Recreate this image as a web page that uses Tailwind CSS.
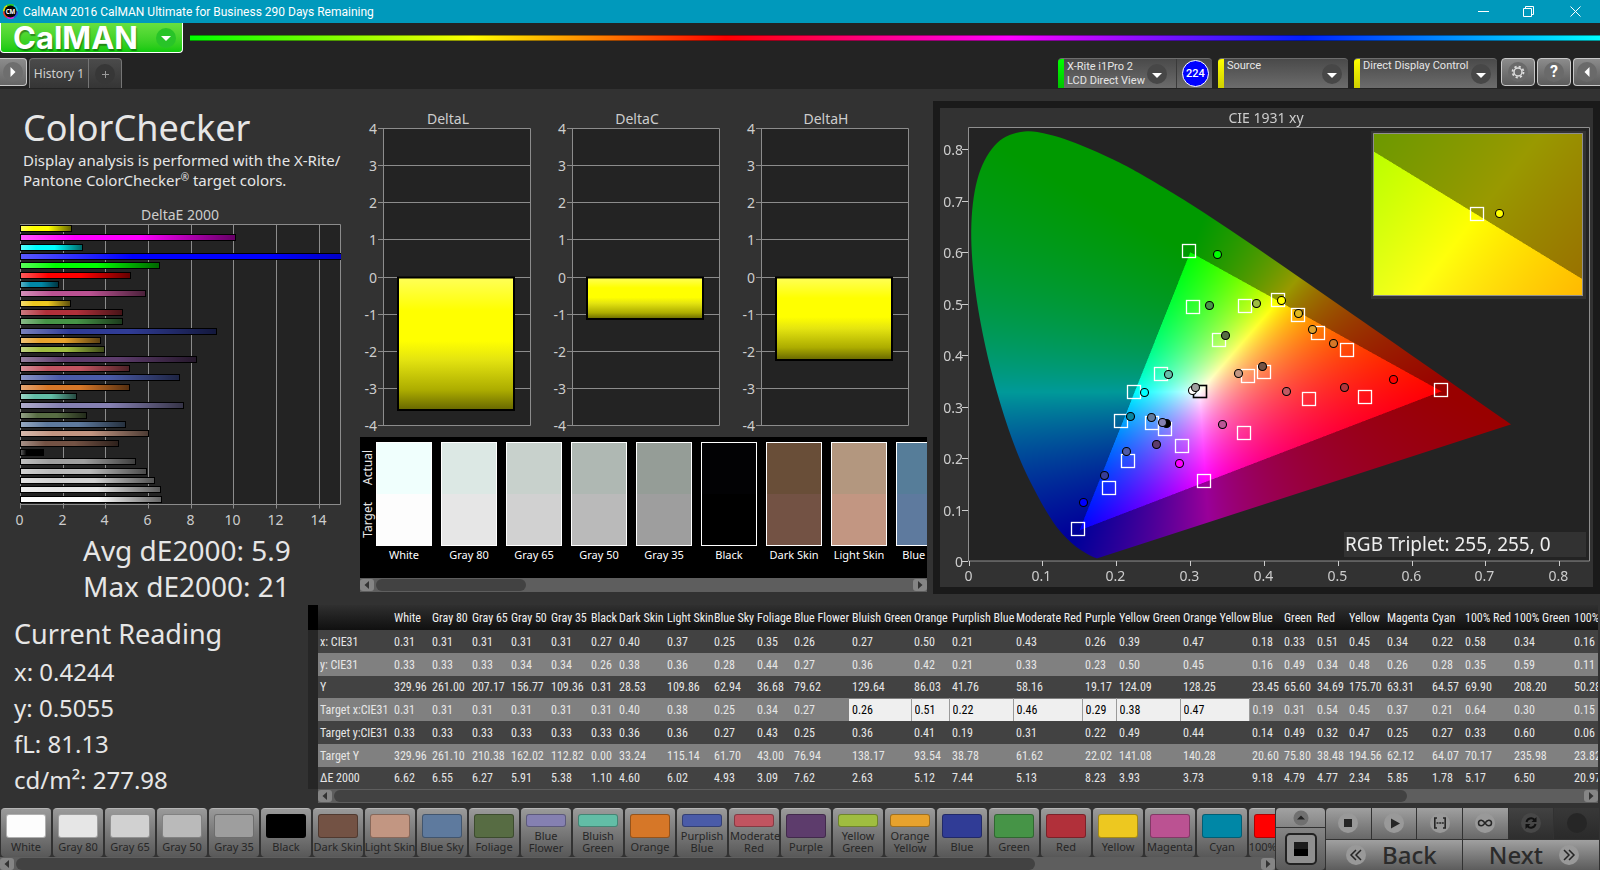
<!DOCTYPE html>
<html lang="en">
<head>
    <meta charset="UTF-8">
    <meta name="viewport" content="width=device-width, initial-scale=1.0">
    <title>CalMAN 2016</title>
    <script src="https://cdn.jsdelivr.net/npm/@tailwindcss/browser@4"></script>
</head>
<body class="min-h-screen overflow-x-hidden bg-[#232323] font-['Noto_Sans','Open_Sans',sans-serif] text-[#e6e6e6] flex flex-col">

    <!-- Title bar -->
    <header class="h-[23px] shrink-0 bg-[#0099bc] text-white flex items-center pl-[3px]">
        <svg class="size-[15px]" viewBox="0 0 16 16">
            <path d="M8 8 0 8A8 8 0 0 1 4 1z" fill="#e6e600"/><path d="M8 8 4 1A8 8 0 0 1 12 1z" fill="#2ecc2e"/>
            <path d="M8 8 12 1A8 8 0 0 1 16 8z" fill="#19c8e6"/><path d="M8 8 16 8A8 8 0 0 1 12 15z" fill="#2a52e0"/>
            <path d="M8 8 12 15A8 8 0 0 1 4 15z" fill="#d82ad8"/><path d="M8 8 4 15A8 8 0 0 1 0 8z" fill="#e63c28"/>
            <circle cx="8" cy="8" r="6.4" fill="#050505"/>
            <text x="8" y="10.4" text-anchor="middle" font-size="6.5" font-weight="700" fill="#fff">CM</text>
        </svg>
        <span class="ml-[5px] text-[12px] leading-4 font-['Roboto']">CalMAN 2016 CalMAN Ultimate for Business 290 Days Remaining</span>
        <div class="ml-auto flex h-full">
            <button aria-label="Minimize" class="w-[45px] flex items-center justify-center"><svg class="size-[11px]" viewBox="0 0 11 11"><path d="M0 5.5h11" stroke="#fff"/></svg></button>
            <button aria-label="Restore" class="w-[45px] flex items-center justify-center"><svg class="size-[11px]" viewBox="0 0 11 11"><path d="M.5 2.500h8v8h-8zM2.500 2.500v-2h8v8h-2" fill="none" stroke="#fff"/></svg></button>
            <button aria-label="Close" class="w-[49px] flex items-center justify-center"><svg class="size-[11px]" viewBox="0 0 11 11"><path d="M.5.5l10 10M10.500.5l-10 10" stroke="#fff"/></svg></button>
        </div>
    </header>

    <!-- Brand and spectrum line -->
    <div class="flex items-start h-[35px]">
        <button class="w-[183px] h-[30px] pl-3 pr-[6px] flex items-center justify-between rounded-b-[4px] border border-t-0 border-white bg-linear-to-b from-[#66e040] to-[#0cc90c]">
            <span class="text-[31px] leading-[30px] font-bold font-['Inter'] text-white [text-shadow:1px_2px_1px_rgba(0,0,0,.35)]">CalMAN</span>
            <svg class="size-5" viewBox="0 0 20 20"><circle cx="10" cy="10" r="10" fill="#28c428"/><path d="M5 8h10l-5 5z" fill="#fff"/></svg>
        </button>
        <div class="flex-1 h-[6px] mt-3 ml-[7px] border-y border-black/40 bg-[linear-gradient(to_right,#00ff00,#ffff00_20%,#ff0000_38%,#ff00ff_58%,#0020ff_79%,#00ffff)]"></div>
    </div>

    <!-- Tabs and device selectors -->
    <div class="flex h-[31px] items-start">
        <button aria-label="Open panel" class="w-[27px] h-7 flex items-center justify-center rounded-r-[4px] border border-l-0 border-[#c8c8c8] bg-linear-to-b from-[#8c8c8c] to-[#666666]">
            <svg class="size-5" viewBox="0 0 20 20"><circle cx="10" cy="10" r="10" fill="#6e6e6e"/><path d="M7.500 5l5 5-5 5z" fill="#fff"/></svg>
        </button>
        <div class="ml-[2px] flex h-[30px] rounded-t-[4px] border border-b-0 border-[#757575] bg-linear-to-b from-[#4b4b4b] to-[#353535]">
            <button class="w-[58px] text-[12px] text-[#d0d0d0] whitespace-nowrap">History 1</button>
            <button aria-label="Add tab" class="w-[33px] border-l border-[#757575] flex items-center justify-center">
                <svg class="size-5" viewBox="0 0 20 20"><circle cx="10" cy="10" r="10" fill="#373737"/><path d="M7 10.500h7M10.500 7v7" stroke="#9a9a9a"/></svg>
            </button>
        </div>

        <div class="ml-auto flex items-start gap-[6px] text-[11px] leading-[14px] font-['Roboto']">
            <div class="w-[154px] h-[30px] flex rounded-t-[4px] overflow-hidden border-t border-[#6e6e6e] bg-linear-to-b from-[#4a4a4a] to-[#6c6c6c]">
                <div class="w-[6px] shrink-0 bg-linear-to-b from-[#00ff00] to-[#00c400]"></div>
                <button class="flex-1 flex items-center justify-between pl-[3px] pr-[9px] text-left whitespace-nowrap">
                    <span>X-Rite i1Pro 2<br>LCD Direct View</span>
                    <svg class="size-5 shrink-0" viewBox="0 0 20 20"><circle cx="10" cy="10" r="10" fill="#474747"/><path d="M5 9h10l-5 5z" fill="#fff"/></svg>
                </button>
                <div class="w-[36px] shrink-0 border-l border-[#3a3a3a] flex items-center justify-center pl-[2px]">
                    <span class="size-[27px] rounded-full border border-white bg-[#0000ff] text-white font-medium flex items-center justify-center">224</span>
                </div>
            </div>
            <div class="w-[130px] h-[30px] flex rounded-t-[4px] overflow-hidden border-t border-[#6e6e6e] bg-linear-to-b from-[#4a4a4a] to-[#6c6c6c]">
                <div class="w-[6px] shrink-0 bg-linear-to-b from-[#ffff00] to-[#d0d000]"></div>
                <button class="flex-1 flex justify-between pl-[3px] pr-[6px] whitespace-nowrap">
                    <span>Source</span>
                    <svg class="size-5 self-center" viewBox="0 0 20 20"><circle cx="10" cy="10" r="10" fill="#474747"/><path d="M5 9h10l-5 5z" fill="#fff"/></svg>
                </button>
            </div>
            <div class="w-[143px] h-[30px] flex rounded-t-[4px] overflow-hidden border-t border-[#6e6e6e] bg-linear-to-b from-[#4a4a4a] to-[#6c6c6c]">
                <div class="w-[6px] shrink-0 bg-linear-to-b from-[#ffff00] to-[#d0d000]"></div>
                <button class="flex-1 flex justify-between pl-[3px] pr-[6px] whitespace-nowrap">
                    <span>Direct Display Control</span>
                    <svg class="size-5 shrink-0 self-center" viewBox="0 0 20 20"><circle cx="10" cy="10" r="10" fill="#474747"/><path d="M5 9h10l-5 5z" fill="#fff"/></svg>
                </button>
            </div>
            <div class="flex gap-[2px] -ml-[2px]">
                <button aria-label="Settings" class="w-[34px] h-7 flex items-center justify-center rounded-[4px] border border-[#c8c8c8] bg-linear-to-b from-[#8c8c8c] to-[#5c5c5c]">
                    <svg class="size-5" viewBox="0 0 20 20"><circle cx="10" cy="10" r="10" fill="#6a6a6a"/><circle cx="10" cy="10" r="4" fill="none" stroke="#ddd" stroke-width="1.500"/><circle cx="10" cy="10" r="5.500" fill="none" stroke="#ddd" stroke-width="1.800" stroke-dasharray="2.200 2.120"/></svg>
                </button>
                <button aria-label="Help" class="w-[34px] h-7 flex items-center justify-center rounded-[4px] border border-[#c8c8c8] bg-linear-to-b from-[#8c8c8c] to-[#5c5c5c]">
                    <span class="size-5 rounded-full bg-[#6a6a6a] text-[16px] leading-5 font-bold text-white">?</span>
                </button>
                <button aria-label="Close panel" class="w-[27px] h-7 flex items-center justify-center rounded-l-[4px] border border-r-0 border-[#c8c8c8] bg-linear-to-b from-[#8c8c8c] to-[#5c5c5c]">
                    <svg class="size-5" viewBox="0 0 20 20"><circle cx="10" cy="10" r="10" fill="#6a6a6a"/><path d="M12.500 5l-5 5 5 5z" fill="#fff"/></svg>
                </button>
            </div>
        </div>
    </div>

    <main class="flex-1 bg-[#323232]">
        <div class="grid grid-cols-[minmax(0,360fr)_minmax(0,567fr)_minmax(0,673fr)]">
            <!-- Summary column -->
            <section class="pt-[19px]">
                <h1 class="pl-[23px] text-[36px] leading-10">ColorChecker</h1>
                <p class="pl-[23px] mt-[2px] text-[15px] leading-5 whitespace-nowrap">Display analysis is performed with the X-Rite/<br>Pantone ColorChecker<sup class="text-[10px]">®</sup> target colors.</p>
                <svg id="deltaE" class="w-full mt-[15px]" viewBox="0 205 360 325"></svg>
                <div class="w-fit ml-[83px] mt-[2px] text-[28px] leading-9">
                    <p>Avg dE2000: 5.9</p>
                    <p>Max dE2000: 21</p>
                </div>
            </section>

            <!-- Delta charts and swatches -->
            <section class="pt-[18px]">
                <div id="deltas" class="grid grid-cols-3"></div>
                <div class="bg-black">
                    <div class="flex h-[141px] pt-[5px] overflow-hidden">
                        <div class="w-4 h-[104px] shrink-0 flex flex-col-reverse justify-around items-center text-[12px] leading-4">
                            <span class="[writing-mode:vertical-rl] rotate-180">Target</span>
                            <span class="[writing-mode:vertical-rl] rotate-180">Actual</span>
                        </div>
                        <div id="swatches" class="flex gap-[9px]"></div>
                    </div>
                    <div class="scrollbar" data-thumb="28"></div>
                </div>
            </section>

            <!-- Chromaticity diagram -->
            <section class="mt-3 ml-[6px] grid self-start border-[7px] border-[#1a1a1a] bg-[#323232]">
                <canvas id="gamut" class="[grid-area:1/1] w-full bg-[#323232]" width="1306" height="958"></canvas>
                <svg id="cie" class="[grid-area:1/1] w-full" viewBox="940 108 653 479"></svg>
            </section>
        </div>

        <div class="flex">
            <!-- Current reading -->
            <section class="w-[308px] shrink-0 pl-[14px] pt-3 leading-9">
                <h2 class="text-[27px]">Current Reading</h2>
                <div class="mt-[2px] text-[24px]">
                    <p>x: 0.4244</p>
                    <p>y: 0.5055</p>
                    <p>fL: 81.13</p>
                    <p>cd/m²: 277.98</p>
                </div>
            </section>
            <section class="flex-1 min-w-0 mr-[2px] mt-px">
                <div class="overflow-hidden">
                    <table id="readings" class="table-fixed w-[1324px] border-collapse text-left text-[12px] leading-4 whitespace-nowrap font-['Noto_Sans_Condensed','Roboto_Condensed','Liberation_Sans',sans-serif]"></table>
                </div>
                <div class="ml-[10px]"><div class="scrollbar" data-thumb="86"></div></div>
            </section>
        </div>
    </main>

    <!-- Pattern picker and transport controls -->
    <footer class="flex h-[63px] bg-[#323232]">
        <div class="flex-1 min-w-0">
            <div id="patterns" class="flex gap-[2px] h-[50px] pt-px pl-px overflow-hidden"></div>
            <div class="scrollbar" data-thumb="82"></div>
        </div>
        <div class="w-[49px] ml-px flex flex-col gap-px">
            <button aria-label="Expand" class="h-[19px] mt-px flex items-center justify-center rounded-t-[4px] bg-linear-to-b from-[#a2a2a2] to-[#858585]">
                <svg class="size-4" viewBox="0 0 16 16"><circle cx="8" cy="8" r="7.500" fill="#707070"/><path d="M4 9.500h8l-4-4z" fill="#222"/></svg>
            </button>
            <button aria-label="Stop pattern" class="h-[42px] flex items-center justify-center rounded-b-[4px] bg-linear-to-b from-[#858585] to-[#5a5a5a]">
                <svg class="size-8" viewBox="0 0 32 32"><rect x="1" y="1" width="30" height="30" rx="4" fill="#8f8f8f" stroke="#222" stroke-width="2"/><path d="M9 9h14v14H9z" fill="#000"/><path d="M9 9h14v7H9z" fill="#1c1c1c"/></svg>
            </button>
        </div>
        <div class="w-[273px] ml-px mr-px mt-px grid grid-cols-6 grid-rows-2 gap-px text-[#2b2b2b]">
            <button aria-label="Stop" class="flex items-center justify-center rounded-tl-[4px] bg-linear-to-b from-[#a0a0a0] to-[#686868]"><svg class="size-5" viewBox="0 0 20 20"><circle cx="10" cy="10" r="10" fill="#999"/><path d="M6 6h8v8H6z" fill="#252525"/></svg></button>
            <button aria-label="Play" class="flex items-center justify-center bg-linear-to-b from-[#a0a0a0] to-[#686868]"><svg class="size-5" viewBox="0 0 20 20"><circle cx="10" cy="10" r="10" fill="#999"/><path d="M7 5.500l9 5-9 5z" fill="#252525"/></svg></button>
            <button aria-label="Read series" class="flex items-center justify-center bg-linear-to-b from-[#a0a0a0] to-[#686868]"><svg class="size-5" viewBox="0 0 20 20"><circle cx="10" cy="10" r="10" fill="#999"/><path d="M7 5H4.800v10H7M13 5h2.200v10H13M6.500 10h2M9.200 10h2M11.800 10h2" fill="none" stroke="#252525" stroke-width="1.600"/></svg></button>
            <button aria-label="Continuous" class="flex items-center justify-center bg-linear-to-b from-[#a0a0a0] to-[#686868]"><svg class="size-5" viewBox="0 0 20 20"><circle cx="10" cy="10" r="10" fill="#999"/><path d="M10 10C8.500 8 7.500 7.200 6.300 7.200a2.800 2.800 0 0 0 0 5.600C7.500 12.800 8.500 12 10 10s2.500-2.800 3.700-2.800a2.800 2.800 0 0 1 0 5.600C12.500 12.800 11.500 12 10 10z" fill="none" stroke="#252525" stroke-width="1.500"/></svg></button>
            <button aria-label="Refresh" class="flex items-center justify-center bg-linear-to-b from-[#424242] to-[#2e2e2e]"><svg class="size-5" viewBox="0 0 20 20"><circle cx="10" cy="10" r="10" fill="#474747"/><path d="M5.500 9a4.700 4.700 0 0 1 8-2.200M14.500 11a4.700 4.700 0 0 1-8 2.200" fill="none" stroke="#111" stroke-width="2"/><path d="M15.500 4v5h-5zM4.500 16v-5h5z" fill="#111"/></svg></button>
            <button aria-label="Record" class="flex items-center justify-center bg-linear-to-b from-[#383838] to-[#2a2a2a]"><svg class="size-5" viewBox="0 0 20 20"><circle cx="10" cy="10" r="10" fill="#262626"/></svg></button>
            <button class="col-span-3 flex items-center gap-4 pl-5 text-[24px] leading-7 font-medium bg-linear-to-b from-[#a0a0a0] to-[#5c5c5c]">
                <svg class="size-5" viewBox="0 0 20 20"><circle cx="10" cy="10" r="10" fill="#999"/><path d="M10 5l-5 5 5 5M15 5l-5 5 5 5" fill="none" stroke="#252525" stroke-width="1.500"/></svg>Back
            </button>
            <button class="col-span-3 flex items-center justify-end gap-4 pr-5 text-[24px] leading-7 font-medium bg-linear-to-b from-[#a0a0a0] to-[#5c5c5c]">
                Next<svg class="size-5" viewBox="0 0 20 20"><circle cx="10" cy="10" r="10" fill="#999"/><path d="M5 5l5 5-5 5M10 5l5 5-5 5" fill="none" stroke="#252525" stroke-width="1.500"/></svg>
            </button>
        </div>
    </footer>

    <script>
        // name, column width, target colour, then the seven table values
        const patches = [
            ["White", 38, "#fdfdfd", "0.31 0.33 329.96 0.31 0.33 329.96 6.62"],
            ["Gray 80", 40, "#e6e6e6", "0.31 0.33 261.00 0.31 0.33 261.10 6.55"],
            ["Gray 65", 39, "#d1d1d1", "0.31 0.33 207.17 0.31 0.33 210.38 6.27"],
            ["Gray 50", 40, "#bababa", "0.31 0.34 156.77 0.31 0.33 162.02 5.91"],
            ["Gray 35", 40, "#9e9e9e", "0.31 0.34 109.36 0.31 0.33 112.82 5.38"],
            ["Black", 28, "#000000", "0.27 0.26 0.31 0.31 0.33 0.00 1.10"],
            ["Dark Skin", 48, "#735244", "0.40 0.38 28.53 0.40 0.36 33.24 4.60"],
            ["Light Skin", 47, "#c29682", "0.37 0.36 109.86 0.38 0.36 115.14 6.02"],
            ["Blue Sky", 43, "#5e7a9e", "0.25 0.28 62.94 0.25 0.27 61.70 4.93"],
            ["Foliage", 37, "#576c43", "0.35 0.44 36.68 0.34 0.43 43.00 3.09"],
            ["Blue Flower", 58, "#8580b1", "0.26 0.27 79.62 0.27 0.25 76.94 7.62"],
            ["Bluish Green", 62, "#62bda6", "0.27 0.36 129.64 0.26 0.36 138.17 2.63"],
            ["Orange", 38, "#d67728", "0.50 0.42 86.03 0.51 0.41 93.54 5.12"],
            ["Purplish Blue", 64, "#4a5ba8", "0.21 0.21 41.76 0.22 0.19 38.78 7.44"],
            ["Moderate Red", 69, "#c15460", "0.43 0.33 58.16 0.46 0.31 61.62 5.13"],
            ["Purple", 34, "#5d3c6c", "0.26 0.23 19.17 0.29 0.22 22.02 8.23"],
            ["Yellow Green", 64, "#9fbd40", "0.39 0.50 124.09 0.38 0.49 141.08 3.93"],
            ["Orange Yellow", 69, "#e7a22d", "0.47 0.45 128.25 0.47 0.44 140.28 3.73"],
            ["Blue", 32, "#303c96", "0.18 0.16 23.45 0.19 0.14 20.60 9.18"],
            ["Green", 33, "#469447", "0.33 0.49 65.60 0.31 0.49 75.80 4.79"],
            ["Red", 32, "#b1303a", "0.51 0.34 34.69 0.54 0.32 38.48 4.77"],
            ["Yellow", 38, "#edc820", "0.45 0.48 175.70 0.45 0.47 194.56 2.34"],
            ["Magenta", 45, "#bb5292", "0.34 0.26 63.31 0.37 0.25 62.12 5.85"],
            ["Cyan", 33, "#0087a6", "0.22 0.28 64.57 0.21 0.27 64.07 1.78"],
            ["100% Red", 49, "#ff0000", "0.58 0.35 69.90 0.64 0.33 70.17 5.17"],
            ["100% Green", 60, "#00ff00", "0.34 0.59 208.20 0.30 0.60 235.98 6.50"],
            ["100% Blue", 61, "#0000ff", "0.16 0.11 50.28 0.15 0.06 23.82 20.97"]
        ];
        const rowNames = ["x: CIE31", "y: CIE31", "Y", "Target x:CIE31", "Target y:CIE31", "Target Y", "ΔE 2000"];

        // Readings table
        document.getElementById('readings').innerHTML = `
            <colgroup><col style="width:10px"><col style="width:73px">${patches.map(p => `<col style="width:${p[1]}px">`).join('')}</colgroup>
            <thead><tr class="h-[25px] bg-linear-to-b from-[#303030] to-[#101010]">
                <td class="bg-black"></td><td></td>
                ${patches.map(p => `<th scope="col" class="p-0 pl-[3px] font-normal text-[#f0f0f0]">${p[0]}</th>`).join('')}
            </tr></thead>
            <tbody>${rowNames.map((name, r) => `
                <tr class="${r % 4 === 2 ? 'h-[22px]' : 'h-[23px]'} ${r % 2 ? 'bg-[#808080]' : 'bg-[#424242]'}">
                    <td class="bg-[#262626]"></td>
                    <th scope="row" class="p-0 pl-[2px] font-normal">${name}</th>
                    ${patches.map((p, c) => {
                        const value = p[3].split(' ')[r];
                        return r === 3 && c > 10 && c < 18
                            ? `<td class="p-0 border-r border-[#9a9a9a]"><input aria-label="${p[0]} target x" value="${value}" class="block w-full h-[22px] pl-[3px] bg-[#efefef] text-black"></td>`
                            : `<td class="p-0 pl-[3px]">${value}</td>`;
                    }).join('')}
                </tr>`).join('')}
            </tbody>`;

        // Pattern buttons
        const twoLine = ["Blue Flower", "Bluish Green", "Purplish Blue", "Moderate Red", "Yellow Green", "Orange Yellow"];
        document.getElementById('patterns').innerHTML = patches.slice(0, 25).map(p => `
            <button class="w-[50px] h-[49px] shrink-0 flex flex-col items-center pt-[5px] rounded-[4px] border-t border-[#b5b5b5] bg-linear-to-b from-[#9a9a9a] to-[#585858] text-[11px] leading-[12px] text-[#262626]">
                <span class="w-10 rounded-[3px] border border-black/30 ${twoLine.includes(p[0]) ? 'h-[13px] mb-[3px]' : 'h-6 mb-[3px]'}" style="background:${p[2]}"></span>
                <span class="${twoLine.includes(p[0]) ? 'w-12 text-center' : 'whitespace-nowrap'}">${p[0]}</span>
            </button>`).join('');

        // Actual over target swatches
        const actual = ["#f0fffd", "#dce8e4", "#c8d1cc", "#afb8b3", "#959d97", "#020204", "#694e38", "#b3977f", "#567d99"];
        document.getElementById('swatches').innerHTML = actual.map((color, i) => `
            <div class="w-14 shrink-0 text-[11px] leading-4 text-white text-center whitespace-nowrap">
                <div class="h-[104px] mb-px border border-white flex flex-col">
                    <div class="flex-1" style="background:${color}"></div>
                    <div class="flex-1" style="background:${patches[i][2]}"></div>
                </div>
                ${patches[i][0]}
            </div>`).join('');

        document.querySelectorAll('.scrollbar').forEach(bar => {
            bar.innerHTML = `
                <div class="flex items-center h-[14px] bg-[#5e5e5e]">
                    <button aria-label="Scroll left" class="w-[14px] h-3 rounded-[3px] bg-[#858585] flex items-center justify-center"><svg class="size-2" viewBox="0 0 8 8"><path d="M6 0v8L1.500 4z" fill="#333"/></svg></button>
                    <div class="flex-1 mx-[2px]"><div class="h-3 rounded-full bg-[#424242]" style="width:${bar.dataset.thumb}%"></div></div>
                    <button aria-label="Scroll right" class="w-[14px] h-3 rounded-[3px] bg-[#858585] flex items-center justify-center"><svg class="size-2" viewBox="0 0 8 8"><path d="M2 0v8l4.500-4z" fill="#333"/></svg></button>
                </div>`;
        });

        // DeltaE 2000 bars, top row first
        const bars = [["#ffff00", 2.4], ["#ff00ff", 10.1], ["#00ffff", 2.93]]
            .concat([26, 25, 24, 23, 22, 21, 20, 19, 18, 17, 16, 15, 14, 13, 12, 11, 10, 9, 8, 7, 6, 5, 4, 3, 2, 1, 0]
                .map(i => [patches[i][2], Number(patches[i][3].split(' ')[6])]));
        let e = `<defs>
            <linearGradient id="shadeX"><stop offset="0" stop-color="#fff" stop-opacity=".35"/><stop offset=".25" stop-color="#fff" stop-opacity="0"/><stop offset=".55" stop-color="#000" stop-opacity="0"/><stop offset="1" stop-color="#000" stop-opacity=".6"/></linearGradient>
            <clipPath id="plotE"><path d="M20 224h321v281H20z"/></clipPath></defs>
            <text x="180" y="220" text-anchor="middle" font-size="14" fill="#cdcdcd">DeltaE 2000</text>
            <path d="M20.500 224.500h320v280h-320z" fill="#232323" stroke="#8c8c8c"/>`;
        for (let v = 0; v <= 14; v += 2) {
            const x = Math.round(20 + v * 21.33) + 0.5;
            e += `<path d="M${x} 224.500v284" stroke="#8c8c8c"/><text x="${x - 1}" y="525" text-anchor="middle" font-size="14" fill="#cdcdcd">${v}</text>`;
        }
        e += '<g clip-path="url(#plotE)">' + bars.map(([color, v], i) => {
            const y = Math.round(225 + i * 9.33), w = Math.round(v * 21.33);
            return `<path d="M20 ${y}h${w + 1}v7H20z"/><path d="M21 ${y + 1}h${w - 1}v5H21z" fill="${color}"/><path d="M21 ${y + 1}h${w - 1}v5H21z" fill="url(#shadeX)"/>`;
        }).join('') + '</g>';
        document.getElementById('deltaE').innerHTML = e;

        // DeltaL / DeltaC / DeltaH
        document.getElementById('deltas').innerHTML = [["DeltaL", 3.6], ["DeltaC", 1.14], ["DeltaH", 2.24]].map(([name, v]) => {
            let s = `<text x="88" y="17" text-anchor="middle" font-size="14" fill="#cdcdcd">${name}</text><path d="M23.500 21.500h147v297h-147z" fill="#232323" stroke="#8c8c8c"/>`;
            for (let k = 4; k >= -4; k--) {
                const y = Math.floor(170 - k * 37.1) + 0.5;
                s += `<path d="M18 ${y}h152" stroke="#8c8c8c"/><text x="17" y="${y + 5}" text-anchor="end" font-size="14" fill="#cdcdcd">${k}</text>`;
            }
            const h = Math.floor(v * 37.1) - 0.5;
            return `<svg class="w-full" viewBox="0 0 189 330">
                <defs><linearGradient id="${name}" x2="0" y2="1"><stop offset="0" stop-color="#ffff58"/><stop offset=".25" stop-color="#ffff00"/><stop offset=".48" stop-color="#ffff00"/><stop offset=".62" stop-color="#e4e410"/><stop offset=".85" stop-color="#acac00"/><stop offset="1" stop-color="#666600"/></linearGradient></defs>
                ${s}<path d="M38 170.500h116v${h}H38z" fill="url(#${name})" stroke="#000" stroke-width="2"/></svg>`;
        }).join('');

        // CIE 1931 diagram
        const X0 = 968.5, Y0 = 561, SX = 738.5, SY = 515;
        const locus = [[.1741, .005], [.1644, .0109], [.144, .0297], [.1241, .0578], [.1096, .0868], [.0913, .1327], [.0687, .2007], [.0454, .295], [.0235, .4127], [.0082, .5384], [.0039, .6548], [.0139, .7502], [.0389, .812], [.0743, .8338], [.1142, .8262], [.1547, .8059], [.1929, .7816], [.2296, .7543], [.3016, .6923], [.3731, .6245], [.4441, .5547], [.5125, .4866], [.5752, .4242], [.627, .3725], [.6658, .334], [.6915, .3083], [.719, .2809], [.7347, .2653]];

        function colorAt(x, y) {
            const z = 1 - x - y;
            const rgb = [
                3.2406 * x - 1.5372 * y - 0.4986 * z,
                -0.9689 * x + 1.8758 * y + 0.0415 * z,
                0.0557 * x - 0.2040 * y + 1.0570 * z
            ];
            const level = Math.min(...rgb) < 0 ? 153 : 255;
            const max = Math.max(...rgb);
            return rgb.map(c => Math.max(0, c) / max * level);
        }

        const canvas = document.getElementById('gamut');
        const ctx = canvas.getContext('2d');

        // fills a page rectangle with chromaticity colours, toXY maps plot units to x,y
        function paint(left, top, width, height, toXY) {
            const layer = document.createElement('canvas');
            layer.width = width * 2;
            layer.height = height * 2;
            const lctx = layer.getContext('2d');
            const image = lctx.createImageData(layer.width, layer.height);
            for (let j = 0, k = 0; j < layer.height; j++) {
                for (let i = 0; i < layer.width; i++, k += 4) {
                    const [r, g, b] = colorAt(...toXY(left + i / 2, top + j / 2));
                    image.data[k] = r;
                    image.data[k + 1] = g;
                    image.data[k + 2] = b;
                    image.data[k + 3] = 255;
                }
            }
            lctx.putImageData(image, 0, 0);
            return layer;
        }

        ctx.setTransform(2, 0, 0, 2, -1880, -216);
        ctx.fillStyle = '#232323';
        ctx.fillRect(969, 128, 620, 433);
        const pts = locus.map(([x, y]) => [X0 + x * SX, Y0 - y * SY]);
        ctx.save();
        ctx.beginPath();
        ctx.moveTo(...pts[0]);
        for (let i = 0; i < pts.length - 1; i++) {
            const a = pts[Math.max(i - 1, 0)], b = pts[i], c = pts[i + 1], d = pts[Math.min(i + 2, pts.length - 1)];
            ctx.bezierCurveTo(b[0] + (c[0] - a[0]) / 6, b[1] + (c[1] - a[1]) / 6, c[0] - (d[0] - b[0]) / 6, c[1] - (d[1] - b[1]) / 6, c[0], c[1]);
        }
        ctx.closePath();
        ctx.clip();
        ctx.drawImage(paint(968, 128, 550, 434, (px, py) => [(px - X0) / SX, (Y0 - py) / SY]), 968, 128, 550, 434);
        ctx.restore();
        // zoomed inset round the current target
        ctx.fillStyle = '#323232';
        ctx.fillRect(1371, 131, 215, 168);
        ctx.drawImage(paint(1373, 133, 210, 163, (px, py) => [.4193 + (px - 1477) / 4430, .5053 - (py - 214.5) / 3412]), 1373, 133, 210, 163);

        const targets = [[1189, 251], [1193, 307], [1245, 306], [1219, 340], [1278, 300], [1298, 315], [1318, 333], [1347, 350], [1161, 374], [1134, 392], [1121, 421], [1152, 423], [1165, 429], [1182, 446], [1128, 461], [1109, 488], [1204, 481], [1078, 529], [1244, 433], [1248, 376], [1264, 372], [1309, 399], [1365, 397], [1441, 390], [1477, 214]];
        const measured = [[1217, 254, "#00ff00"], [1209, 305, "#489448"], [1256, 303, "#9dbc40"], [1225, 335, "#576c43"], [1281, 300, "#ffff00"], [1298, 313, "#e0b91f"], [1312, 329, "#e0a32e"], [1333, 343, "#d67728"], [1168, 374, "#67bdaa"], [1144, 392, "#00ffff"], [1130, 416, "#0885a1"], [1151, 417, "#627a9d"], [1166, 423, "#000000"], [1162, 422, "#8580b1"], [1156, 444, "#5e3c6c"], [1126, 451, "#505ba6"], [1104, 475, "#383d96"], [1083, 502, "#0000ff"], [1179, 463, "#ff00ff"], [1222, 424, "#bb5695"], [1238, 373, "#c29682"], [1262, 366, "#735244"], [1192, 390, "#ffffff"], [1195, 387, "#9e9e9e"], [1286, 391, "#c15a63"], [1344, 387, "#af363c"], [1393, 379, "#ff0000"], [1499, 213, "#ffff00"]];
        let c = '<text x="1266" y="123" text-anchor="middle" font-size="14" fill="#cdcdcd">CIE 1931 xy</text><path d="M968.500 127.500h621v433.500h-621zM1373.500 133.500h209v162h-209z" fill="none" stroke="#8f8f8f"/>';
        for (let k = 0; k <= 8; k++) {
            const x = Math.round(X0 + k * 73.85) + 0.5, y = Math.round(Y0 - k * 51.5) + 0.5, label = k ? `0.${k}` : '0';
            c += `<path d="M${x} 561v5M962 ${y}h6" stroke="#cdcdcd"/>
                <text x="${x - 1}" y="581" text-anchor="middle" font-size="14" fill="#cdcdcd">${label}</text>
                <text x="963" y="${y + 5}" text-anchor="end" font-size="14" fill="#cdcdcd">${label}</text>`;
        }
        c += targets.map(([x, y]) => `<rect x="${x - 6.5}" y="${y - 6.5}" width="13" height="13" fill="none" stroke="#fff" stroke-width="1.300"/>`).join('');
        c += '<rect x="1193.500" y="385.500" width="13" height="12" fill="none" stroke="#000" stroke-width="1.600"/>';
        c += measured.map(([x, y, color]) => `<circle cx="${x + 0.5}" cy="${y + 0.5}" r="4" fill="${color}" stroke="#000" stroke-width="1.100"/>`).join('');
        c += '<path d="M1344 532h242v25h-242z" fill="#323232"/><text x="1345" y="551" font-size="19" fill="#eee">RGB Triplet: 255, 255, 0</text>';
        document.getElementById('cie').innerHTML = c;
    </script>
</body>
</html>
